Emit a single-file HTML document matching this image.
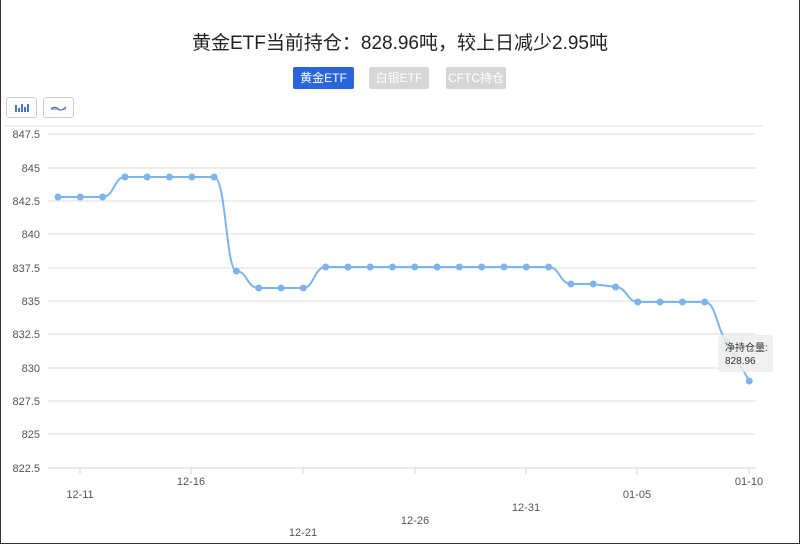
<!DOCTYPE html>
<html><head><meta charset="utf-8"><style>
html,body{margin:0;padding:0;background:#fff}
body{width:800px;height:545px;position:relative;overflow:hidden;font-family:"Liberation Sans","Noto Sans CJK SC",sans-serif}
.frame{position:absolute;left:0;top:0;width:798px;height:543px;border:1px solid #333;border-top:none;}
.title{position:absolute;top:28px;left:0;width:800px;text-align:center;font-size:19px;color:#222}
.btn{position:absolute;top:67px;height:22px;line-height:22px;font-size:12px;text-align:center;color:#fff;border-radius:2px}
.ib{position:absolute;top:97px;width:29px;height:19px;border:1px solid #ccc;border-radius:3px;background:#fff}
</style></head><body>
<div class="frame"></div>
<div class="title">黄金ETF当前持仓：828.96吨，较上日减少2.95吨</div>
<div class="btn" style="left:293px;width:61px;background:#2a66d9">黄金ETF</div>
<div class="btn" style="left:369px;width:60px;background:#d6d6d6">白银ETF</div>
<div class="btn" style="left:446px;width:60px;background:#d6d6d6">CFTC持仓</div>
<div class="ib" style="left:6px"><svg width="29" height="19"><g fill="#4a78c0"><rect x="8" y="7" width="2" height="7"/><rect x="11" y="10" width="2" height="4"/><rect x="14" y="6" width="2" height="8"/><rect x="17" y="9" width="2" height="5"/><rect x="20" y="6" width="2" height="8"/></g></svg></div>
<div class="ib" style="left:43px"><svg width="29" height="19"><path d="M7 11 Q11 8 14 11 T22 9" stroke="#4a78c0" fill="none" stroke-width="1.5"/><path d="M7 12 Q11 9 14 12 T22 10 L22 12 L7 12Z" fill="#a9c0e6"/></svg></div>
<svg width="800" height="545" style="position:absolute;left:0;top:0" font-family="Liberation Sans,sans-serif" font-size="11" fill="#555">
<line x1="5" y1="126" x2="764" y2="126" stroke="#e6e6e6"/>
<g stroke="#ddd">
<line x1="48" y1="134" x2="756" y2="134"/><line x1="48" y1="168" x2="756" y2="168"/><line x1="48" y1="201" x2="756" y2="201"/><line x1="48" y1="234" x2="756" y2="234"/><line x1="48" y1="268" x2="756" y2="268"/><line x1="48" y1="301" x2="756" y2="301"/><line x1="48" y1="334" x2="756" y2="334"/><line x1="48" y1="368" x2="756" y2="368"/><line x1="48" y1="401" x2="756" y2="401"/><line x1="48" y1="434" x2="756" y2="434"/>
</g>
<line x1="48" y1="468" x2="756" y2="468" stroke="#c8d4e8"/>
<g stroke="#c8d4e8"><line x1="80" y1="468" x2="80" y2="474"/><line x1="191" y1="468" x2="191" y2="474"/><line x1="303" y1="468" x2="303" y2="474"/><line x1="415" y1="468" x2="415" y2="474"/><line x1="526" y1="468" x2="526" y2="474"/><line x1="637" y1="468" x2="637" y2="474"/><line x1="749" y1="468" x2="749" y2="474"/></g>
<g text-anchor="end"><text x="40" y="138">847.5</text><text x="40" y="172">845</text><text x="40" y="205">842.5</text><text x="40" y="238">840</text><text x="40" y="272">837.5</text><text x="40" y="305">835</text><text x="40" y="338">832.5</text><text x="40" y="372">830</text><text x="40" y="405">827.5</text><text x="40" y="438">825</text><text x="40" y="472">822.5</text></g>
<g text-anchor="middle"><text x="80" y="498">12-11</text><text x="191" y="485">12-16</text><text x="303" y="536">12-21</text><text x="415" y="524">12-26</text><text x="526" y="511">12-31</text><text x="637" y="498">01-05</text><text x="749" y="485">01-10</text></g>
<path d="M58 197 L102.6 197 C114 197 114 177 124.9 177 L214.1 177 C226 177 226 271 236.4 271 C247 271 247 288 258.7 288 L303.3 288 C314 288 314 267 325.6 267 L548.6 267 C560 267 560 284 570.9 284 L593.2 284 L615.5 287 C627 287 627 302 637.8 302 L704.7 302 C716 302 716 328 727 342 L749.3 381" stroke="#7cb5ec" stroke-width="2" fill="none"/>
<g fill="#7cb5ec">
<circle cx="58" cy="197" r="3.5"/><circle cx="80.3" cy="197" r="3.5"/><circle cx="102.6" cy="197" r="3.5"/>
<circle cx="124.9" cy="177" r="3.5"/><circle cx="147.2" cy="177" r="3.5"/><circle cx="169.5" cy="177" r="3.5"/><circle cx="191.8" cy="177" r="3.5"/><circle cx="214.1" cy="177" r="3.5"/>
<circle cx="236.4" cy="271" r="3.5"/><circle cx="258.7" cy="288" r="3.5"/><circle cx="281" cy="288" r="3.5"/><circle cx="303.3" cy="288" r="3.5"/>
<circle cx="325.6" cy="267" r="3.5"/><circle cx="347.9" cy="267" r="3.5"/><circle cx="370.2" cy="267" r="3.5"/><circle cx="392.5" cy="267" r="3.5"/><circle cx="414.8" cy="267" r="3.5"/><circle cx="437.1" cy="267" r="3.5"/><circle cx="459.4" cy="267" r="3.5"/><circle cx="481.7" cy="267" r="3.5"/><circle cx="504" cy="267" r="3.5"/><circle cx="526.3" cy="267" r="3.5"/><circle cx="548.6" cy="267" r="3.5"/>
<circle cx="570.9" cy="284" r="3.5"/><circle cx="593.2" cy="284" r="3.5"/><circle cx="615.5" cy="287" r="3.5"/>
<circle cx="637.8" cy="302" r="3.5"/><circle cx="660.1" cy="302" r="3.5"/><circle cx="682.4" cy="302" r="3.5"/><circle cx="704.7" cy="302" r="3.5"/>
<circle cx="727" cy="342" r="3.5"/><circle cx="749.3" cy="381" r="3.5"/>
</g>
<rect x="718" y="335" width="55" height="37" rx="3" fill="#ededed" fill-opacity="0.85"/>
<text x="725" y="351" fill="#333" font-family="Liberation Sans,Noto Sans CJK SC,sans-serif" font-size="10">净持仓量:</text>
<text x="725" y="364" fill="#333" font-size="10">828.96</text>
</svg>
</body></html>
